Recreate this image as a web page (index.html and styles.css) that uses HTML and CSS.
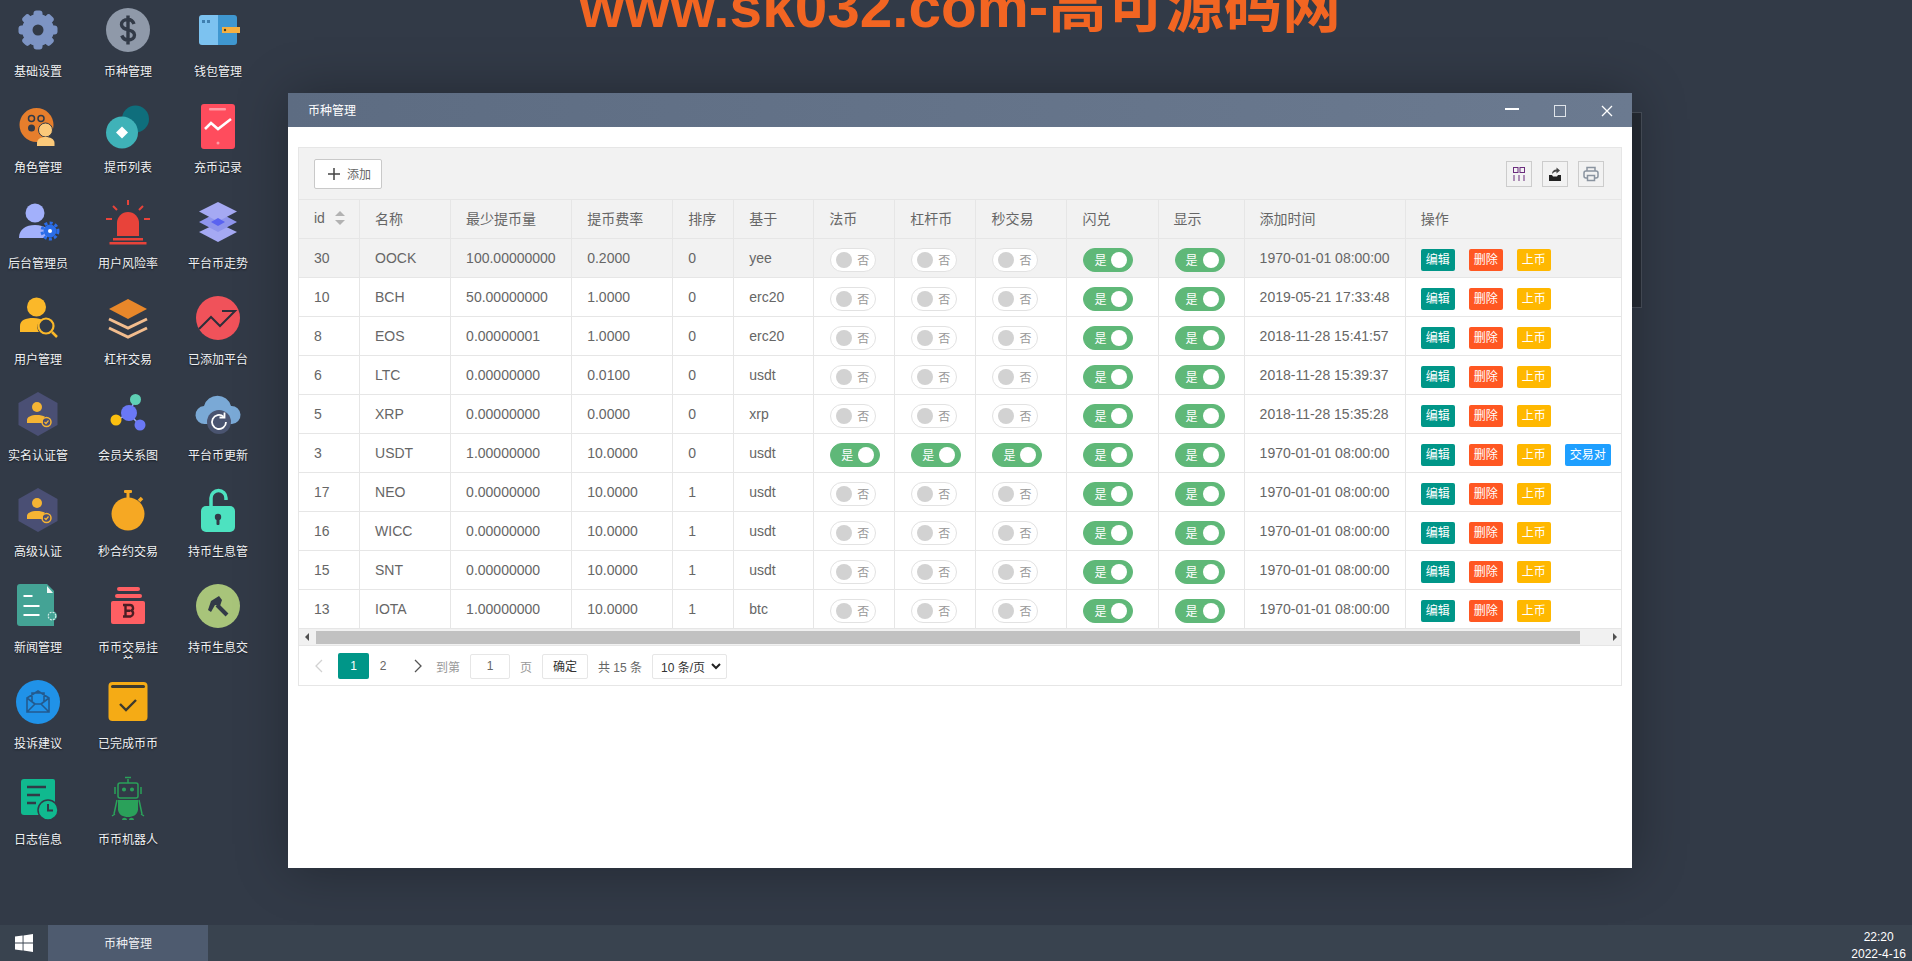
FILE: index.html
```html
<!DOCTYPE html>
<html lang="zh-CN">
<head>
    <meta charset="UTF-8">
    <title>币种管理</title>
    <link rel="stylesheet" href="styles.css">
</head>
<body>
    <div class="banner">www.sk032.com-高可源码网</div>

    <div class="desktop">
        <div class="shortcut"><svg viewBox="0 0 48 48"><g fill="#7d94c4"><circle cx="24" cy="24" r="16"/><rect x="19.500" y="4.500" width="9" height="39" rx="3"/><rect x="19.500" y="4.500" width="9" height="39" rx="3" transform="rotate(45 24 24)"/><rect x="19.500" y="4.500" width="9" height="39" rx="3" transform="rotate(90 24 24)"/><rect x="19.500" y="4.500" width="9" height="39" rx="3" transform="rotate(135 24 24)"/></g><circle cx="24" cy="24" r="5.500" fill="#323a47"/></svg><span>基础设置</span></div>
        <div class="shortcut"><svg viewBox="0 0 48 48"><circle cx="24" cy="24" r="22" fill="#8f99a9"/><path d="M30 18c-1-3-3.200-4.500-6-4.500-3.800 0-6.500 2-6.500 5 0 6.500 13 4 13 10.500 0 3-2.700 5-6.500 5-2.800 0-5-1.500-6.200-4.500M24 9.500v29" fill="none" stroke="#323a47" stroke-width="3.400"/></svg><span>币种管理</span></div>
        <div class="shortcut"><svg viewBox="0 0 48 48"><path d="M24 9h-16a3 3 0 0 0-3 3v24a3 3 0 0 0 3 3h16z" fill="#7cc2f0"/><path d="M24 9h16a3 3 0 0 1 3 3v24a3 3 0 0 1-3 3h-16z" fill="#3f97d0"/><rect x="8" y="14" width="3" height="3" fill="#3f7fb0"/><rect x="13" y="14" width="3" height="3" fill="#3f7fb0"/><path d="M28 21h18v6h-18z" fill="#f5b041"/><circle cx="31" cy="24" r="1.200" fill="#4a3a10"/></svg><span>钱包管理</span></div>

        <div class="shortcut"><svg viewBox="0 0 48 48"><circle cx="22.500" cy="23" r="17" fill="#e67e2c"/><circle cx="17.500" cy="16.500" r="3" fill="none" stroke="#323a47" stroke-width="1.500"/><circle cx="27" cy="16.500" r="3" fill="none" stroke="#323a47" stroke-width="1.500"/><circle cx="17.500" cy="26" r="3.500" fill="#323a47"/><circle cx="31.500" cy="28" r="7" fill="#fbc97a" stroke="#323a47" stroke-width="1"/><path d="M23 44v-3c0-4 4-6 8.500-6s9 2 9 6v3z" fill="#fbc97a"/></svg><span>角色管理</span></div>
        <div class="shortcut"><svg viewBox="0 0 48 48"><circle cx="31.500" cy="17" r="13.500" fill="#0f6e7c"/><circle cx="18" cy="30.500" r="16" fill="#3fb2b8"/><path d="M18 24.500l6 6-6 6-6-6z" fill="#fff"/></svg><span>提币列表</span></div>
        <div class="shortcut"><svg viewBox="0 0 48 48"><rect x="7" y="2" width="34" height="45" rx="3" fill="#ff4c5d"/><rect x="15" y="6" width="17" height="2.500" rx="1" fill="#ff9aa4"/><path d="M11 27l6-6 7 6 13-10" fill="none" stroke="#fff" stroke-width="2.600"/><circle cx="24" cy="41" r="1.500" fill="#ff9aa4"/></svg><span>充币记录</span></div>

        <div class="shortcut"><svg viewBox="0 0 48 48"><circle cx="21" cy="15" r="9.500" fill="#a2b0fb"/><path d="M5 40c0-9 7-13 16-13 5 0 9 1 12 4v9z" fill="#a2b0fb"/><circle cx="36" cy="33" r="6.500" fill="#2b6de8"/><circle cx="36" cy="33" r="8" fill="none" stroke="#2b6de8" stroke-width="3" stroke-dasharray="3 2.300"/><circle cx="36" cy="33" r="2" fill="#fff"/></svg><span>后台管理员</span></div>
        <div class="shortcut"><svg viewBox="0 0 48 48"><path d="M13 38v-13a11 11 0 0 1 22 0v13z" fill="#e8433a"/><path d="M9 40h30v2.500h-30zM5.500 44h37v2.500h-37z" fill="#e8433a"/><path d="M24 2v5M9 8l4 4M39 8l-4 4M2 21h6M40 21h6" stroke="#e8433a" stroke-width="2"/></svg><span>用户风险率</span></div>
        <div class="shortcut"><svg viewBox="0 0 48 48"><path d="M24 25l19 9-19 10-19-10z" fill="#a5a9f3"/><path d="M24 14l19 10-19 10-19-10z" fill="#8f95ec"/><path d="M24 4l19 9.500-19 10-19-10z" fill="#a5a9f3"/><path d="M24 20l7 4-7 4-7-4z" fill="#5a63f0"/></svg><span>平台币走势</span></div>

        <div class="shortcut"><svg viewBox="0 0 48 48"><circle cx="22.500" cy="13" r="9.500" fill="#fbb829"/><path d="M6 38v-6c0-6 6-8 13-8 5 0 8 1 9 2-5 2-6 8-3 12z" fill="#fbb829"/><circle cx="32" cy="32" r="7.500" fill="none" stroke="#fbb829" stroke-width="2.200"/><path d="M38 38l5 5" stroke="#fbb829" stroke-width="2.500"/></svg><span>用户管理</span></div>
        <div class="shortcut"><svg viewBox="0 0 48 48"><path d="M24 5l19 10-19 10-19-10z" fill="#e8872a"/><path d="M5 25l19 9 19-9M5 34l19 9 19-9" fill="none" stroke="#f3bd8e" stroke-width="3"/></svg><span>杠杆交易</span></div>
        <div class="shortcut"><svg viewBox="0 0 48 48"><circle cx="24" cy="24" r="22" fill="#f0525a"/><path d="M5 35l12-12 9 9 15-15h-13" fill="none" stroke="#2c2f3a" stroke-width="2"/></svg><span>已添加平台</span></div>

        <div class="shortcut"><svg viewBox="0 0 48 48"><path id="hex" d="M24 2l19.500 11v22l-19.500 11-19.500-11v-22z" fill="#4a4f74"/><circle cx="23" cy="17" r="5" fill="#f5b434"/><path d="M13 33v-3c0-3 4-5 10-5 3 0 6 .6 8 1.800-2 1.500-2.500 4-2 6.200z" fill="#f5b434"/><circle cx="32.500" cy="32" r="4.500" fill="none" stroke="#f5b434" stroke-width="1.500"/><path d="M30.500 32l1.500 1.500 2.500-3" fill="none" stroke="#f5b434" stroke-width="1.200"/></svg><span>实名认证管</span></div>
        <div class="shortcut"><svg viewBox="0 0 48 48"><path d="M26 21l6-13M23 25l-11 5M28 27l7 7" stroke="#9aa6f5" stroke-width="1.500"/><circle cx="25" cy="23" r="8" fill="#6a78f5"/><circle cx="31.500" cy="9.500" r="5.500" fill="#5fd0b5"/><circle cx="12" cy="30" r="5.500" fill="#fbbf0f"/><circle cx="36" cy="35" r="5.500" fill="#6a78f5"/></svg><span>会员关系图</span></div>
        <div class="shortcut"><svg viewBox="0 0 48 48"><path d="M11 34a9 9 0 0 1-1-18 14 14 0 0 1 27 0 8.500 8.500 0 0 1 1 18z" fill="#7aa9d6"/><circle cx="25" cy="32" r="12" fill="#4a5470"/><path d="M32 32a7 7 0 1 1-2.500-5.400" fill="none" stroke="#fff" stroke-width="1.800"/><path d="M30.500 22.500v5h-5" fill="none" stroke="#fff" stroke-width="1.800"/></svg><span>平台币更新</span></div>

        <div class="shortcut"><svg viewBox="0 0 48 48"><use href="#hex"/><circle cx="23" cy="17" r="5" fill="#f5b434"/><path d="M13 33v-3c0-3 4-5 10-5 3 0 6 .6 8 1.800-2 1.500-2.500 4-2 6.200z" fill="#f5b434"/><circle cx="32.500" cy="32" r="4.500" fill="none" stroke="#f5b434" stroke-width="1.500"/><path d="M30.500 32l1.500 1.500 2.500-3" fill="none" stroke="#f5b434" stroke-width="1.200"/></svg><span>高级认证</span></div>
        <div class="shortcut"><svg viewBox="0 0 48 48"><circle cx="24" cy="28" r="16.500" fill="#f6a823"/><rect x="20" y="4" width="8" height="3" rx="1" fill="#f6a823"/><rect x="22.500" y="6" width="3" height="6" fill="#f6a823"/><path d="M35 15l3-3" stroke="#f6a823" stroke-width="3.500"/></svg><span>秒合约交易</span></div>
        <div class="shortcut"><svg viewBox="0 0 48 48"><path d="M17 22v-10a7.500 7.500 0 0 1 15 0v2" fill="none" stroke="#4de2c0" stroke-width="3.500"/><rect x="7" y="20" width="34" height="26" rx="5" fill="#4de2c0"/><circle cx="24" cy="31" r="3.200" fill="#323a47"/><rect x="22.500" y="32" width="3" height="7" rx="1" fill="#323a47"/></svg><span>持币生息管</span></div>

        <div class="shortcut"><svg viewBox="0 0 48 48"><path d="M6 2h27l7 7v35h-34a3 3 0 0 1-3-3v-36a3 3 0 0 1 3-3z" fill="#44a395"/><path d="M33 4l6 7h-6z" fill="#f2f7f6"/><path d="M9.500 14h9M9.500 24h16M9.500 33h16" stroke="#fff" stroke-width="2.200"/><circle cx="38" cy="34" r="5" fill="#44a395"/><circle cx="38" cy="34" r="3.800" fill="none" stroke="#cfeae5" stroke-width="1.200" stroke-dasharray="2 1"/></svg><span>新闻管理</span></div>
        <div class="shortcut"><svg viewBox="0 0 48 48"><rect x="13" y="5" width="23" height="4" rx="2" fill="#ff5f63"/><rect x="11" y="12" width="27" height="4" rx="2" fill="#ff5f63"/><rect x="7" y="19" width="34" height="23" rx="2" fill="#ff5f63"/><path d="M19 23h7a3 3 0 0 1 1.500 5.600 3.200 3.200 0 0 1-1 5.900h-7.500M21.500 23v11.500M21 28.800h5" fill="none" stroke="#4a1e24" stroke-width="2.400"/></svg><span>币币交易挂单</span></div>
        <div class="shortcut"><svg viewBox="0 0 48 48"><circle cx="24" cy="24" r="22" fill="#a8c47a"/><path d="M14 28l3-9 8-5 3 4-2 6-5-1-4 7z" fill="#323a47"/><path d="M23 23l10 10" stroke="#323a47" stroke-width="4"/></svg><span>持币生息交</span></div>

        <div class="shortcut"><svg viewBox="0 0 48 48"><circle cx="24" cy="24" r="22" fill="#2092e8"/><path d="M13 20v14h22v-14l-11-7z M13 34l8-8h6l8 8M13 20l8 6M35 20l-8 6M18 23v-8h12v8" fill="none" stroke="#235a8e" stroke-width="1.600"/></svg><span>投诉建议</span></div>
        <div class="shortcut"><svg viewBox="0 0 48 48"><rect x="4.500" y="4" width="39" height="39" rx="4" fill="#f5ab15"/><rect x="7" y="7" width="34" height="3" rx="1.500" fill="#3d3a2e"/><path d="M16 26l6 6 10-10" fill="none" stroke="#3d3a2e" stroke-width="2.400"/></svg><span>已完成币币</span></div>
        <div class="spacer"></div>

        <div class="shortcut"><svg viewBox="0 0 48 48"><path d="M10 5h29a2 2 0 0 1 2 2v34h-31a3 3 0 0 1-3-3v-30a3 3 0 0 1 3-3z" fill="#10b98f"/><path d="M13 13h19M13 21h13M13 29h9" stroke="#323a47" stroke-width="2.400"/><circle cx="34" cy="36" r="10" fill="#10b98f" stroke="#323a47" stroke-width="1.500"/><path d="M34 30v6.500h5" fill="none" stroke="#323a47" stroke-width="2"/></svg><span>日志信息</span></div>
        <div class="shortcut"><svg viewBox="0 0 48 48" fill="none" stroke="#2aa15a" stroke-width="1.500"><path d="M24 9v-4M21 3.500h6"/><rect x="14" y="9" width="20" height="15" rx="2"/><circle cx="20" cy="15.500" r="1.300" fill="#2aa15a"/><circle cx="28" cy="15.500" r="1.300" fill="#2aa15a"/><path d="M11 13v7M37 13v7"/><rect x="14" y="26" width="20" height="10" fill="#2aa15a" stroke="none"/><path d="M14 36c1 5 5 7 10 7s9-2 10-7z" fill="#2aa15a" stroke="none"/><path d="M13 26l-3 14M35 26l3 14M8 42l3-2M40 42l-3-2"/><path d="M18 46c0-3 5-3 5 0zM30 46c0-3-5-3-5 0z" fill="#2aa15a" stroke="none"/></svg><span>币币机器人</span></div>
    </div>

    <div class="taskbar">
        <div class="start">
            <svg width="18" height="18" viewBox="0 0 18 18" fill="#fff"><path d="M0 2.600l7.600-1.100v7.100h-7.600zM8.500 1.400l9.500-1.400v8.600h-9.500zM0 9.500h7.600v7.100l-7.600-1.100zM8.500 9.500h9.500v8.500l-9.500-1.400z"/></svg>
        </div>
        <div class="task-item">币种管理</div>
        <div class="clock">22:20<br>2022-4-16</div>
    </div>

    <div class="back-window"></div>

    <div class="window">
        <div class="window-title">
            <span class="window-name">币种管理</span>
            <div class="window-btns">
                <svg width="14" height="12" viewBox="0 0 14 12"><path d="M0 4h14" stroke="#fff" stroke-width="2"/></svg>
                <svg width="12" height="12" viewBox="0 0 12 12"><rect x=".5" y=".5" width="11" height="11" fill="none" stroke="#dfe4ea"/></svg>
                <svg width="12" height="12" viewBox="0 0 12 12"><path d="M1 1l10 10M11 1l-10 10" stroke="#fff" stroke-width="1.300"/></svg>
            </div>
        </div>
        <div class="window-body">
            <div class="panel">
                <div class="toolbar">
                    <button class="add-btn"><svg width="14" height="14" viewBox="0 0 14 14"><path d="M7 1v12M1 7h12" stroke="#444" stroke-width="1.500"/></svg>添加</button>
                    <div class="tools">
                        <span class="tool"><svg width="16" height="16" viewBox="0 0 16 16" fill="none" stroke="#6a2b7d"><rect x="2.500" y="1.500" width="4.500" height="5"/><rect x="9" y="1.500" width="4.500" height="5"/><path d="M3 9v6M8 9v6M13 9v6"/></svg></span>
                        <span class="tool"><svg width="16" height="16" viewBox="0 0 16 16"><path d="M2 9h3l1 1.500h4l1-1.500h3v6h-12z" fill="#222"/><path d="M5 8c0-3 2-4.500 4.500-4.500v-2l3.500 3-3.500 3v-2c-2 0-3 1-4.500 2.500z" fill="#444"/></svg></span>
                        <span class="tool"><svg width="16" height="16" viewBox="0 0 16 16" fill="none" stroke="#8a94a0" stroke-width="1.500"><path d="M4 5v-3.500h8v3.500"/><rect x="1" y="5" width="14" height="7" rx="2"/><rect x="4.500" y="9.500" width="7" height="5" fill="#f2f2f2"/></svg></span>
                    </div>
                </div>
                <div class="table-box">
                    <table class="data-table">
                        <colgroup>
                            <col class="c61"><col class="c91"><col class="c121"><col class="c101"><col class="c61"><col class="c80"><col class="c81"><col class="c81"><col class="c91"><col class="c91"><col class="c86"><col class="c161"><col class="c215">
                        </colgroup>
                        <thead>
                            <tr><th>id<i class="sort"></i></th><th>名称</th><th>最少提币量</th><th>提币费率</th><th>排序</th><th>基于</th><th>法币</th><th>杠杆币</th><th>秒交易</th><th>闪兑</th><th>显示</th><th>添加时间</th><th>操作</th></tr>
                        </thead>
                        <tbody>
                            <tr class="hover"><td>30</td><td>OOCK</td><td>100.00000000</td><td>0.2000</td><td>0</td><td>yee</td><td><span class="sw"><i></i>否</span></td><td><span class="sw"><i></i>否</span></td><td><span class="sw"><i></i>否</span></td><td><span class="sw on">是<i></i></span></td><td><span class="sw on">是<i></i></span></td><td>1970-01-01 08:00:00</td><td><a class="btn teal">编辑</a><a class="btn red">删除</a><a class="btn gold">上币</a></td></tr>
                            <tr><td>10</td><td>BCH</td><td>50.00000000</td><td>1.0000</td><td>0</td><td>erc20</td><td><span class="sw"><i></i>否</span></td><td><span class="sw"><i></i>否</span></td><td><span class="sw"><i></i>否</span></td><td><span class="sw on">是<i></i></span></td><td><span class="sw on">是<i></i></span></td><td>2019-05-21 17:33:48</td><td><a class="btn teal">编辑</a><a class="btn red">删除</a><a class="btn gold">上币</a></td></tr>
                            <tr><td>8</td><td>EOS</td><td>0.00000001</td><td>1.0000</td><td>0</td><td>erc20</td><td><span class="sw"><i></i>否</span></td><td><span class="sw"><i></i>否</span></td><td><span class="sw"><i></i>否</span></td><td><span class="sw on">是<i></i></span></td><td><span class="sw on">是<i></i></span></td><td>2018-11-28 15:41:57</td><td><a class="btn teal">编辑</a><a class="btn red">删除</a><a class="btn gold">上币</a></td></tr>
                            <tr><td>6</td><td>LTC</td><td>0.00000000</td><td>0.0100</td><td>0</td><td>usdt</td><td><span class="sw"><i></i>否</span></td><td><span class="sw"><i></i>否</span></td><td><span class="sw"><i></i>否</span></td><td><span class="sw on">是<i></i></span></td><td><span class="sw on">是<i></i></span></td><td>2018-11-28 15:39:37</td><td><a class="btn teal">编辑</a><a class="btn red">删除</a><a class="btn gold">上币</a></td></tr>
                            <tr><td>5</td><td>XRP</td><td>0.00000000</td><td>0.0000</td><td>0</td><td>xrp</td><td><span class="sw"><i></i>否</span></td><td><span class="sw"><i></i>否</span></td><td><span class="sw"><i></i>否</span></td><td><span class="sw on">是<i></i></span></td><td><span class="sw on">是<i></i></span></td><td>2018-11-28 15:35:28</td><td><a class="btn teal">编辑</a><a class="btn red">删除</a><a class="btn gold">上币</a></td></tr>
                            <tr><td>3</td><td>USDT</td><td>1.00000000</td><td>10.0000</td><td>0</td><td>usdt</td><td><span class="sw on">是<i></i></span></td><td><span class="sw on">是<i></i></span></td><td><span class="sw on">是<i></i></span></td><td><span class="sw on">是<i></i></span></td><td><span class="sw on">是<i></i></span></td><td>1970-01-01 08:00:00</td><td><a class="btn teal">编辑</a><a class="btn red">删除</a><a class="btn gold">上币</a><a class="btn blue">交易对</a></td></tr>
                            <tr><td>17</td><td>NEO</td><td>0.00000000</td><td>10.0000</td><td>1</td><td>usdt</td><td><span class="sw"><i></i>否</span></td><td><span class="sw"><i></i>否</span></td><td><span class="sw"><i></i>否</span></td><td><span class="sw on">是<i></i></span></td><td><span class="sw on">是<i></i></span></td><td>1970-01-01 08:00:00</td><td><a class="btn teal">编辑</a><a class="btn red">删除</a><a class="btn gold">上币</a></td></tr>
                            <tr><td>16</td><td>WICC</td><td>0.00000000</td><td>10.0000</td><td>1</td><td>usdt</td><td><span class="sw"><i></i>否</span></td><td><span class="sw"><i></i>否</span></td><td><span class="sw"><i></i>否</span></td><td><span class="sw on">是<i></i></span></td><td><span class="sw on">是<i></i></span></td><td>1970-01-01 08:00:00</td><td><a class="btn teal">编辑</a><a class="btn red">删除</a><a class="btn gold">上币</a></td></tr>
                            <tr><td>15</td><td>SNT</td><td>0.00000000</td><td>10.0000</td><td>1</td><td>usdt</td><td><span class="sw"><i></i>否</span></td><td><span class="sw"><i></i>否</span></td><td><span class="sw"><i></i>否</span></td><td><span class="sw on">是<i></i></span></td><td><span class="sw on">是<i></i></span></td><td>1970-01-01 08:00:00</td><td><a class="btn teal">编辑</a><a class="btn red">删除</a><a class="btn gold">上币</a></td></tr>
                            <tr><td>13</td><td>IOTA</td><td>1.00000000</td><td>10.0000</td><td>1</td><td>btc</td><td><span class="sw"><i></i>否</span></td><td><span class="sw"><i></i>否</span></td><td><span class="sw"><i></i>否</span></td><td><span class="sw on">是<i></i></span></td><td><span class="sw on">是<i></i></span></td><td>1970-01-01 08:00:00</td><td><a class="btn teal">编辑</a><a class="btn red">删除</a><a class="btn gold">上币</a></td></tr>
                        </tbody>
                    </table>
                </div>
                <div class="scrollbar">
                    <i class="arrow-left"></i>
                    <div class="thumb"></div>
                    <i class="arrow-right"></i>
                </div>
                <div class="pager">
                    <svg class="pg-arrow" width="10" height="14" viewBox="0 0 10 14"><path d="M8 1l-6 6 6 6" fill="none" stroke="#d2d2d2" stroke-width="1.300"/></svg>
                    <span class="pg-cur">1</span>
                    <span class="pg-num">2</span>
                    <svg class="pg-arrow next" width="10" height="14" viewBox="0 0 10 14"><path d="M2 1l6 6-6 6" fill="none" stroke="#555" stroke-width="1.300"/></svg>
                    <span class="pg-label first">到第</span>
                    <span class="pg-input">1</span>
                    <span class="pg-label">页</span>
                    <span class="pg-ok">确定</span>
                    <span class="pg-total">共 15 条</span>
                    <span class="pg-size">10 条/页<svg width="10" height="7" viewBox="0 0 10 7"><path d="M1 1l4 4 4-4" fill="none" stroke="#222" stroke-width="2"/></svg></span>
                </div>
            </div>
        </div>
    </div>
</body>
</html>
```

FILE: styles.css
```css
* {
    box-sizing: border-box;
}
html, body {
    height: 100%;
}
body {
    margin: 0;
    display: flex;
    flex-direction: column;
    overflow: hidden;
    background-color: #323a47;
    font-family: "Liberation Sans", "Noto Sans CJK SC", sans-serif;
    font-size: 14px;
    color: #666;
}

/* desktop */
.banner {
    position: absolute;
    left: 579px;
    top: -23px;
    width: 764px;
    font-size: 58.500px;
    line-height: 59px;
    font-weight: bold;
    white-space: nowrap;
    color: #f26522;
}
.desktop {
    flex: 1;
    display: grid;
    grid-template-columns: repeat(3, 76px);
    grid-auto-rows: 96px;
    column-gap: 14px;
    align-content: start;
    padding-top: 6px;
}
.shortcut {
    display: flex;
    flex-direction: column;
    align-items: center;
}
.shortcut svg {
    width: 48px;
    height: 48px;
    flex: none;
}
.shortcut span {
    width: 62px;
    height: 18px;
    margin-top: 11px;
    overflow: hidden;
    font-size: 12px;
    line-height: 14px;
    text-align: center;
    color: #f0f2f5;
    text-shadow: 0 1px 2px rgba(0, 0, 0, 0.6);
}

/* taskbar */
.taskbar {
    height: 36px;
    display: flex;
    background-color: #39434f;
    color: #fff;
    font-size: 12px;
}
.start {
    width: 48px;
    display: flex;
    align-items: center;
    justify-content: center;
}
.task-item {
    width: 160px;
    line-height: 38px;
    text-align: center;
    background-color: #4e5b6f;
    color: #eef0f3;
}
.clock {
    margin-left: auto;
    padding: 4px 6px 0 0;
    line-height: 17px;
    text-align: center;
}

/* windows */
.back-window {
    position: absolute;
    left: 600px;
    top: 112px;
    width: 1042px;
    height: 196px;
    background-color: #262c35;
    border: 1px solid #4a515c;
}
.window {
    position: absolute;
    left: 288px;
    top: 93px;
    width: 1344px;
    height: 775px;
    background-color: #fff;
    box-shadow: 1px 1px 50px rgba(0, 0, 0, 0.3);
}
.window-title {
    height: 34px;
    display: flex;
    align-items: center;
    justify-content: space-between;
    padding: 0 19px 0 20px;
    background: linear-gradient(90deg, #5d6c82 0%, #6b7a90 100%);
    color: #fff;
    font-size: 12px;
}
.window-name {
    padding-bottom: 2px;
}
.window-btns {
    display: flex;
    gap: 35px;
    align-items: center;
    padding-top: 2px;
}
.window-body {
    padding: 20px 10px;
}

/* table panel */
.panel {
    height: 539px;
    border: 1px solid #e6e6e6;
}
.toolbar {
    height: 52px;
    display: flex;
    align-items: center;
    justify-content: space-between;
    padding: 0 17px 0 15px;
    background-color: #f2f2f2;
    border-bottom: 1px solid #e6e6e6;
}
.add-btn {
    width: 68px;
    height: 30px;
    display: flex;
    align-items: center;
    gap: 6px;
    padding: 0 0 0 12px;
    background-color: #fff;
    border: 1px solid #c9c9c9;
    border-radius: 2px;
    font-family: inherit;
    font-size: 12px;
    color: #666;
}
.tools {
    display: flex;
    gap: 10px;
}
.tool {
    width: 26px;
    height: 26px;
    display: flex;
    align-items: center;
    justify-content: center;
    border: 1px solid #ccc;
}
.table-box {
    overflow: hidden;
}
.data-table {
    width: 1322px;
    table-layout: fixed;
    border-collapse: separate;
    border-spacing: 0;
}
.c61 { width: 61px; }
.c80 { width: 80px; }
.c81 { width: 81px; }
.c86 { width: 86px; }
.c91 { width: 91px; }
.c101 { width: 101px; }
.c121 { width: 121px; }
.c161 { width: 161px; }
.c215 { width: 215px; }
.data-table th,
.data-table td {
    height: 39px;
    padding: 0 15px;
    border-right: 1px solid #e6e6e6;
    border-bottom: 1px solid #e6e6e6;
    font-weight: normal;
    text-align: left;
    white-space: nowrap;
    overflow: hidden;
}
.data-table th:last-child,
.data-table td:last-child {
    border-right: none;
}
.data-table th {
    padding-bottom: 2px;
    background-color: #f2f2f2;
}
.hover td {
    background-color: #f2f2f2;
}
.sort {
    display: inline-block;
    position: relative;
    width: 10px;
    height: 14px;
    margin-left: 10px;
    vertical-align: -2px;
}
.sort::before,
.sort::after {
    content: "";
    position: absolute;
    left: 0;
    border-left: 5px solid transparent;
    border-right: 5px solid transparent;
}
.sort::before {
    top: 0;
    border-bottom: 5px solid #b2b2b2;
}
.sort::after {
    bottom: 0;
    border-top: 5px solid #b2b2b2;
}

/* switch */
.sw {
    width: 46px;
    height: 24px;
    display: inline-flex;
    align-items: center;
    gap: 5px;
    padding: 0 5px;
    margin: 3px 0 0 1px;
    vertical-align: middle;
    background-color: #fff;
    border: 1px solid #e2e2e2;
    border-radius: 20px;
    font-size: 12px;
    color: #999;
}
.sw i {
    width: 16px;
    height: 16px;
    border-radius: 50%;
    background-color: #d2d2d2;
    flex: none;
}
.sw.on {
    width: 50px;
    justify-content: flex-end;
    background-color: #5fb878;
    border-color: #5fb878;
    color: #fff;
}
.sw.on i {
    background-color: #fff;
}

/* action buttons */
.btn {
    display: inline-block;
    height: 22px;
    margin: 3px 14px 0 0;
    padding: 0 5px;
    vertical-align: middle;
    border-radius: 2px;
    font-size: 12px;
    line-height: 22px;
    color: #fff;
}
.teal { background-color: #009688; }
.red { background-color: #ff5722; }
.gold { background-color: #ffb800; }
.blue { background-color: #1e9fff; margin-right: 0; }

/* scrollbar + pager */
.scrollbar {
    height: 17px;
    display: flex;
    align-items: center;
    background-color: #f1f1f1;
    border-bottom: 1px solid #e6e6e6;
    padding: 0 4px 0 6px;
}
.thumb {
    width: 1264px;
    height: 13px;
    margin-left: 7px;
    background-color: #c1c1c1;
}
.arrow-left {
    border-top: 4px solid transparent;
    border-bottom: 4px solid transparent;
    border-right: 4px solid #505050;
}
.arrow-right {
    margin-left: auto;
    border-top: 4px solid transparent;
    border-bottom: 4px solid transparent;
    border-left: 4px solid #505050;
}
.pager {
    height: 40px;
    display: flex;
    align-items: center;
    padding-left: 15px;
    font-size: 12px;
    color: #666;
}
.pg-cur {
    width: 31px;
    height: 26px;
    margin-left: 14px;
    border-radius: 2px;
    background-color: #009688;
    color: #fff;
    line-height: 26px;
    text-align: center;
}
.pg-num {
    width: 28px;
    text-align: center;
}
.pg-arrow.next {
    margin-left: 16px;
}
.pg-label {
    margin-left: 10px;
    color: #999;
}
.pg-label.first {
    margin-left: 13px;
}
.pg-input {
    width: 40px;
    height: 25px;
    margin-left: 10px;
    border: 1px solid #e6e6e6;
    border-radius: 2px;
    line-height: 23px;
    text-align: center;
}
.pg-ok {
    width: 46px;
    height: 25px;
    margin-left: 10px;
    border: 1px solid #e6e6e6;
    border-radius: 2px;
    line-height: 25px;
    text-align: center;
    color: #333;
}
.pg-total {
    margin-left: 10px;
}
.pg-size {
    width: 75px;
    height: 25px;
    margin-left: 10px;
    display: flex;
    align-items: center;
    justify-content: space-between;
    padding: 0 5px 0 8px;
    border: 1px solid #e6e6e6;
    border-radius: 2px;
    color: #333;
}
```
